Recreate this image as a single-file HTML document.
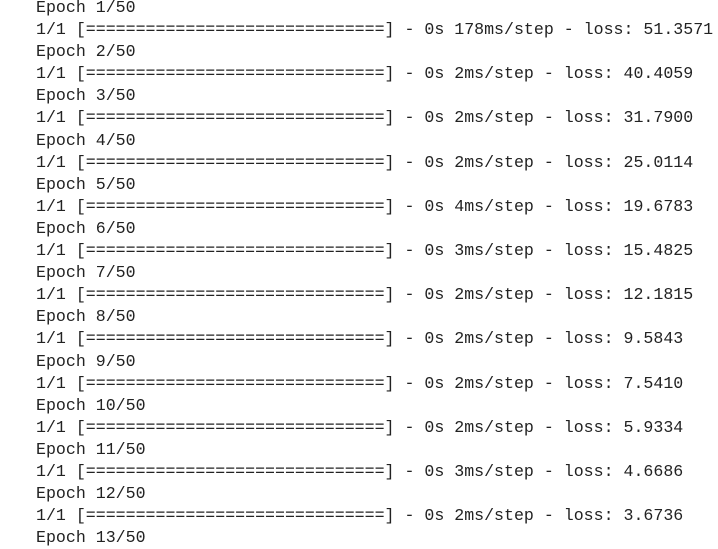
<!DOCTYPE html>
<html><head><style>
html,body{margin:0;padding:0;background:#fff;width:718px;height:534px;overflow:hidden}
pre{position:absolute;left:36px;top:-3px;margin:0;font-family:"Liberation Mono",monospace;font-size:16.6px;line-height:22.1px;color:#222;white-space:pre}
</style></head><body><pre>Epoch 1/50
1/1 [==============================] - 0s 178ms/step - loss: 51.3571
Epoch 2/50
1/1 [==============================] - 0s 2ms/step - loss: 40.4059
Epoch 3/50
1/1 [==============================] - 0s 2ms/step - loss: 31.7900
Epoch 4/50
1/1 [==============================] - 0s 2ms/step - loss: 25.0114
Epoch 5/50
1/1 [==============================] - 0s 4ms/step - loss: 19.6783
Epoch 6/50
1/1 [==============================] - 0s 3ms/step - loss: 15.4825
Epoch 7/50
1/1 [==============================] - 0s 2ms/step - loss: 12.1815
Epoch 8/50
1/1 [==============================] - 0s 2ms/step - loss: 9.5843
Epoch 9/50
1/1 [==============================] - 0s 2ms/step - loss: 7.5410
Epoch 10/50
1/1 [==============================] - 0s 2ms/step - loss: 5.9334
Epoch 11/50
1/1 [==============================] - 0s 3ms/step - loss: 4.6686
Epoch 12/50
1/1 [==============================] - 0s 2ms/step - loss: 3.6736
Epoch 13/50</pre></body></html>
